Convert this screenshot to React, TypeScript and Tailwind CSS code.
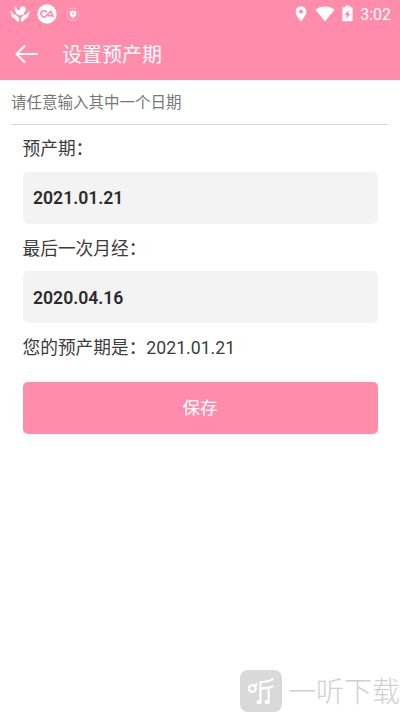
interface DateFieldProps {
  label: string;
  value: string;
}

function BabyIcon() {
  return (
    <svg width="20" height="18" viewBox="0 0 20 18" fill="#fff">
      <circle cx="12.8" cy="4.4" r="2.9" />
      <path d="M4.2 1.8 6 1.6 7.2 4.6l3 1 4.3 1.2L13.4 9.6l-3.4 1-3.6-1.8L5.2 5.4z" />
      <path d="M.3 6 1.6 6.2 2.8 8.8l4 1.8 2.6 2.8L8.8 17 6 15.6 5.2 14 2 12z" />
      <path d="M19.7 6 18.4 6.2 17.2 8.8l-4 1.8-2.6 2.8.6 3.6L14 15.6l.8-1.600L18 12z" />
    </svg>
  );
}

function BadgeIcon() {
  return (
    <svg width="20" height="20" viewBox="0 0 20 20" fill="none">
      <circle cx="10" cy="10" r="9.7" fill="#fff" />
      <g stroke="#ff8caa" strokeWidth="1.6" strokeLinecap="round" strokeLinejoin="round">
        <path d="M9.6 8A3.1 3.1 0 1 0 8.8 12.4L13.6 7.2l2.8 5.4" />
        <path d="M11.4 11.6h4" />
      </g>
    </svg>
  );
}

function ShieldIcon() {
  return (
    <svg width="14" height="14" viewBox="0 0 14 14">
      <circle cx="7" cy="7" r="6" fill="none" stroke="#fff" strokeOpacity=".4" strokeWidth=".8" />
      <path d="M7 3.4 10.2 4.4v2.4C10.2 8.8 8.8 10.2 7 11 5.2 10.2 3.8 8.8 3.8 6.8V4.4z" fill="#fff" />
      <path d="M7 5.6v2.2M6 6.5h2" stroke="#ff8caa" strokeWidth=".6" />
    </svg>
  );
}

function StatusBar() {
  return (
    <div className="flex h-7 items-center justify-between pl-2.5 pr-[9px]">
      <div className="flex items-center">
        <BabyIcon />
        <div className="ml-[7px]">
          <BadgeIcon />
        </div>
        <div className="ml-[9px]">
          <ShieldIcon />
        </div>
      </div>
      <div className="flex items-center">
        <svg width="12" height="16" viewBox="0 0 12 16" fill="#fff">
          <path
            fillRule="evenodd"
            d="M6 .2A5.4 5.4 0 0 0 .6 5.6C.6 9.5 6 15.6 6 15.6s5.4-6.1 5.4-10A5.4 5.4 0 0 0 6 .2zm0 3.4a2 2 0 1 1 0 4 2 2 0 0 1 0-4z"
          />
        </svg>
        <svg className="ml-2" width="20" height="16" viewBox="0 0 20 16" fill="#fff">
          <path d="M.4 3.6C5.8-.5 14.2-.5 19.6 3.6L10 15.6z" />
        </svg>
        <svg className="-mt-0.5 ml-[7px]" width="11" height="17" viewBox="0 0 11 17">
          <path d="M3.5.6h4v1.6h2.3q.8 0 .8.8v12.4q0 .8-.8.8H1.2q-.8 0-.8-.8V3q0-.8.8-.8h2.3z" fill="#fff" />
          <path d="M6.8 4.8 2.6 10h2.3l-.7 3.8L8.4 8.8H6z" fill="#ff8caa" />
        </svg>
        <span className="ml-[7px] pt-px text-[16px] leading-5 text-white">3:02</span>
      </div>
    </div>
  );
}

function DateField({ label, value }: DateFieldProps) {
  return (
    <div>
      <div className="flex h-[47px] items-center pt-[3px] text-[17.7px]">{label}</div>
      <div className="flex h-[52.3px] items-center rounded-[5px] bg-[#f3f3f3] pl-[10.5px] pt-0.5 text-[17.6px] font-semibold text-[#2b2b2b]">
        {value}
      </div>
    </div>
  );
}

function Watermark() {
  return (
    <div className="flex items-center">
      <svg width="42" height="42" viewBox="0 0 42 42" fill="none">
        <rect width="42" height="42" rx="8" fill="#d9d9d9" />
        <g stroke="#fff" strokeWidth="2.2" strokeLinecap="round" strokeLinejoin="round">
          <circle cx="12.3" cy="18.5" r="3.4" />
          <path d="M15.2 16 16.6 14" />
          <path d="M32.5 9C30 11.5 26 12 20.5 12V31.5" />
          <path d="M20.5 18.3C25 18.3 29 18 32.5 16.5" />
          <path d="M28.7 18V31.5" />
        </g>
        <g fill="#fff">
          <ellipse cx="19" cy="32" rx="2.6" ry="2.2" />
          <ellipse cx="27.2" cy="32" rx="2.6" ry="2.2" />
        </g>
      </svg>
      <span className="ml-1.5 whitespace-nowrap pt-1 text-[28px] font-light leading-[38px] text-[#d0d0d0]">
        一听下载
      </span>
    </div>
  );
}

export default function App() {
  return (
    <div className="flex h-[712px] w-[400px] flex-col overflow-hidden bg-white font-['Roboto','Noto_Sans_CJK_SC',sans-serif] text-[#3c3c3c]">
      <header className="h-20 shrink-0 bg-[#ff8caa]">
        <StatusBar />
        <div className="flex h-[52px] items-center pl-[15px]">
          <svg width="24" height="20" viewBox="0 0 24 20" fill="none" stroke="#fff" strokeWidth="2">
            <path d="M22.5 10H2M10 1.5 1.5 10l8.500 8.500" />
          </svg>
          <h1 className="ml-[23px] pt-0.5 text-[20px] leading-7 text-white">设置预产期</h1>
        </div>
      </header>
      <div className="ml-[11px] mr-3 flex h-[44.5px] items-center border-b border-[#d6d6d6] pt-[3px] text-[15.5px] text-[#777]">
        请任意输入其中一个日期
      </div>
      <main className="px-[22.5px]">
        <DateField label="预产期：" value="2021.01.21" />
        <DateField label="最后一次月经：" value="2020.04.16" />
        <div className="flex h-12 items-center pt-[3px] text-[17.7px]">您的预产期是：2021.01.21</div>
        <button className="mt-[11px] h-[52px] w-full rounded-[5px] bg-[#ff8caa] pt-px text-[17.6px] text-white">
          保存
        </button>
      </main>
      <footer className="mt-auto flex justify-end">
        <Watermark />
      </footer>
    </div>
  );
}
